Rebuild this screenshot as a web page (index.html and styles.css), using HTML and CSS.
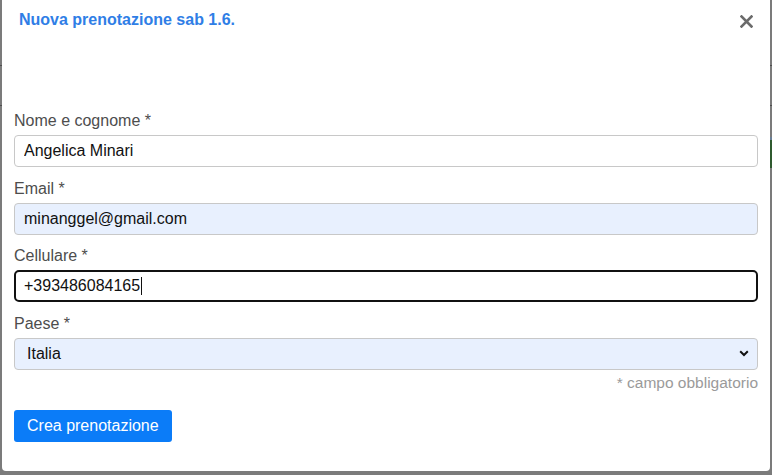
FILE: index.html
```html
<!DOCTYPE html>
<html lang="it">
<head>
<meta charset="utf-8">
<title>Nuova prenotazione</title>
<link rel="stylesheet" href="styles.css">
</head>
<body>
<div class="modal">
  <div class="modal-header">
    <h5 class="modal-title">Nuova prenotazione sab 1.6.</h5>
    <button class="close" type="button" aria-label="Chiudi">
      <svg width="13" height="13" viewBox="0 0 13 13"><path d="M1.5 1.5 L11.5 11.5 M11.5 1.5 L1.5 11.5" stroke="#6b6b6b" stroke-width="2.6" stroke-linecap="square"/></svg>
    </button>
  </div>
  <form class="modal-body">
    <div class="group">
      <label class="label">Nome e cognome *</label>
      <input class="field" type="text" value="Angelica Minari">
    </div>
    <div class="group">
      <label class="label">Email *</label>
      <input class="field autofill" type="text" value="minanggel@gmail.com">
    </div>
    <div class="group">
      <label class="label">Cellulare *</label>
      <div class="field focused"><span>+393486084165</span><span class="caret"></span></div>
    </div>
    <div class="group last">
      <label class="label">Paese *</label>
      <select class="field autofill select"><option>Italia</option></select>
    </div>
    <div class="note">* campo obbligatorio</div>
    <div class="actions"><button class="btn" type="button">Crea prenotazione</button></div>
  </form>
</div>
</body>
</html>
```
FILE: styles.css
```css
html, body {
  margin: 0;
  padding: 0;
}
body {
  width: 772px;
  height: 475px;
  overflow: hidden;
  font-family: "Liberation Sans", Arial, sans-serif;
  background-color: #7b7b7b;
  background-image:
    linear-gradient(to bottom, transparent 65px, #4f4f4f 65px, #4f4f4f 66px, transparent 66px),
    linear-gradient(to bottom, transparent 105px, #4f4f4f 105px, #4f4f4f 106px, transparent 106px),
    linear-gradient(to bottom, transparent 137px, #6a7f95 137px, #6a7f95 140px, #2f5a2f 140px, #2f5a2f 168px, transparent 168px);
  background-size: 100% 100%, 100% 100%, 2px 100%;
  background-position: 0 0, 0 0, right top;
  background-repeat: no-repeat;
}
.modal {
  margin: 0 2px;
  height: 471px;
  background: #fff;
  border-radius: 0 0 4px 4px;
  box-sizing: border-box;
}
.modal-header {
  display: flex;
  justify-content: space-between;
  align-items: flex-start;
  padding: 11px 17px 0 17px;
}
.modal-title {
  margin: 0;
  font-size: 16px;
  line-height: 18px;
  font-weight: bold;
  color: #2f7ee6;
}
.close {
  border: 0;
  background: none;
  padding: 0;
  margin-top: 4px;
  width: 13px;
  height: 13px;
  display: block;
}
.close svg { display: block; }
.modal-body {
  padding: 82px 12px 0 12px;
  margin: 0;
}
.group {
  margin-bottom: 11.67px;
}
.group.last { margin-bottom: 0; }
.label {
  display: block;
  font-size: 16px;
  line-height: 20px;
  color: #4d4d4d;
  margin-bottom: 4px;
}
.field {
  display: block;
  width: 100%;
  height: 32px;
  box-sizing: border-box;
  border: 1px solid #c8c8c8;
  border-radius: 4px;
  padding: 0 9px;
  font-family: "Liberation Sans", Arial, sans-serif;
  font-size: 16px;
  color: #111;
  background: #fff;
  outline: none;
  margin: 0;
}
.autofill {
  background-color: #e8f0fe;
}
.focused {
  border: 2px solid #111;
  border-radius: 5px;
  padding: 0 8px;
  display: flex;
  align-items: center;
}
.caret {
  display: inline-block;
  width: 1px;
  height: 18px;
  background: #111;
  margin-left: 1px;
}
.select {
  -webkit-appearance: none;
  appearance: none;
  padding-left: 12px;
  background-image: url("data:image/svg+xml;utf8,<svg xmlns='http://www.w3.org/2000/svg' width='10' height='7' viewBox='0 0 10 7'><path d='M1.2 1.3 L5 5 L8.8 1.3' fill='none' stroke='%23111' stroke-width='2'/></svg>");
  background-repeat: no-repeat;
  background-position: right 8px center;
}
.note {
  margin-top: 3px;
  text-align: right;
  font-size: 15.5px;
  line-height: 20px;
  color: #9a9a9a;
}
.actions {
  margin-top: 17px;
}
.btn {
  height: 32px;
  padding: 0 13px;
  border: 0;
  border-radius: 3px;
  background: #0b7cf8;
  color: #fff;
  font-family: "Liberation Sans", Arial, sans-serif;
  font-size: 16px;
}
```
